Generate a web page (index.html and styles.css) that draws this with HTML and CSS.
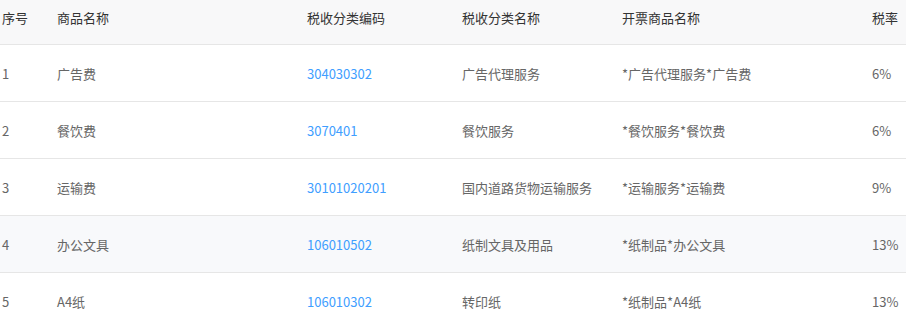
FILE: index.html
```html
<!DOCTYPE html>
<html lang="zh-CN">
<head>
<meta charset="utf-8">
<title>商品税收分类</title>
<link rel="stylesheet" href="styles.css">
</head>
<body>
<table class="goods-table">
  <colgroup>
    <col class="c-idx"><col class="c-name"><col class="c-code"><col class="c-cat"><col class="c-inv"><col class="c-rate">
  </colgroup>
  <thead>
    <tr>
      <th>序号</th><th>商品名称</th><th>税收分类编码</th><th>税收分类名称</th><th>开票商品名称</th><th>税率</th>
    </tr>
  </thead>
  <tbody>
    <tr><td>1</td><td>广告费</td><td class="code">304030302</td><td>广告代理服务</td><td>*广告代理服务*广告费</td><td>6%</td></tr>
    <tr><td>2</td><td>餐饮费</td><td class="code">3070401</td><td>餐饮服务</td><td>*餐饮服务*餐饮费</td><td>6%</td></tr>
    <tr><td>3</td><td>运输费</td><td class="code">30101020201</td><td>国内道路货物运输服务</td><td>*运输服务*运输费</td><td>9%</td></tr>
    <tr class="hover"><td>4</td><td>办公文具</td><td class="code">106010502</td><td>纸制文具及用品</td><td>*纸制品*办公文具</td><td>13%</td></tr>
    <tr><td>5</td><td>A4纸</td><td class="code">106010302</td><td>转印纸</td><td>*纸制品*A4纸</td><td>13%</td></tr>
  </tbody>
</table>
</body>
</html>
```

FILE: styles.css
```css
html, body {
  margin: 0;
  padding: 0;
  background: #ffffff;
}

body {
  font-family: "Noto Sans CJK SC", "Open Sans", sans-serif;
  font-size: 13px;
  color: #666666;
}

.goods-table {
  width: 906px;
  border-collapse: collapse;
  table-layout: fixed;
}

.c-idx { width: 55px; }
.c-name { width: 250px; }
.c-code { width: 155px; }
.c-cat { width: 160px; }
.c-inv { width: 250px; }
.c-rate { width: 36px; }

.goods-table th {
  background: #f8f8f9;
  color: #333333;
  font-weight: normal;
  text-align: left;
  line-height: 20px;
  height: 20px;
  padding: 8px 0 16px 2px;
  border-bottom: 1px solid #e6e6e6;
  white-space: nowrap;
}

.goods-table td {
  line-height: 20px;
  height: 20px;
  padding: 19px 0 17px 2px;
  border-bottom: 1px solid #e6e6e6;
  white-space: nowrap;
}

.goods-table td.code {
  color: #409eff;
}

.goods-table tr.hover td {
  background: #f8f9fb;
}
```
